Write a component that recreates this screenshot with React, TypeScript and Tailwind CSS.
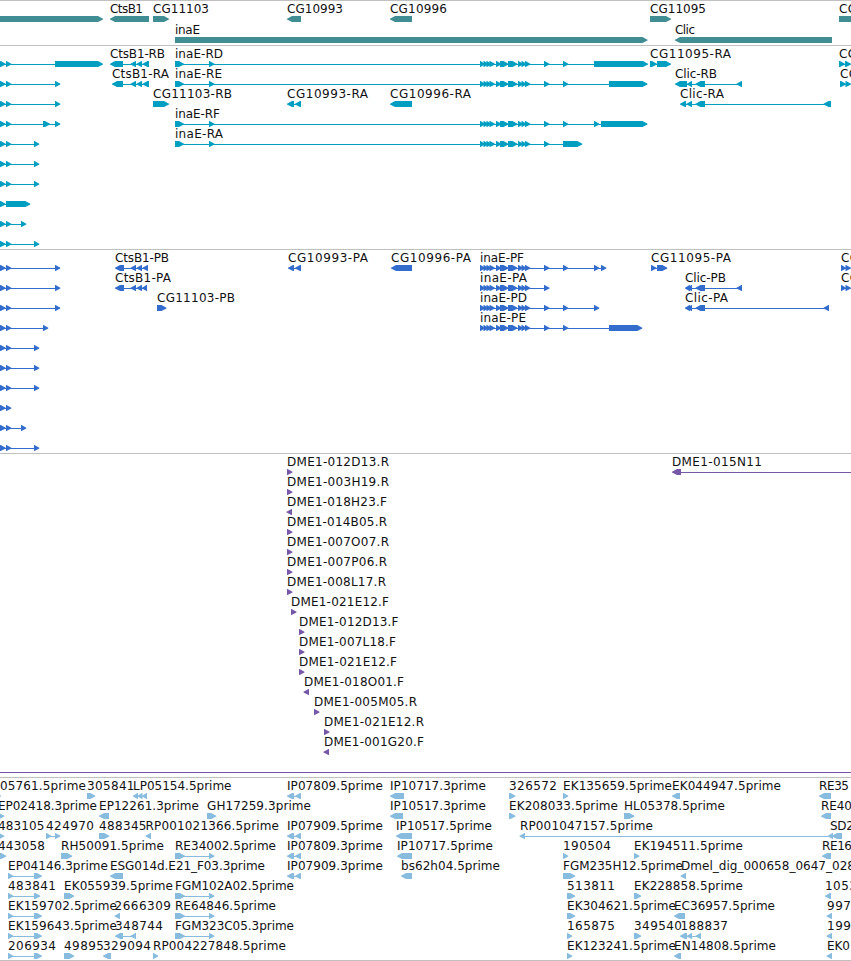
import React from "react";

type Exon = [number, number];

type Feature = {
  row: number;
  exons: Exon[];
  dir?: "left" | "right";
  // start, end and text of the caption above the feature
  label?: [number, number, string];
  // overrides the intron line, which normally runs from first to last exon
  line?: Exon;
};

type TrackProps = {
  features: Feature[];
  height: number;
  color: string;
  pitch?: number;
};

const TIP = 5;

const f = (
  row: number,
  dir: "left" | "right",
  exons: Exon[],
  label?: [number, number, string],
  line?: Exon
): Feature => ({ row, dir, exons, label, line });

// exons shared by every inaE isoform
const inaE: Exon[] = [
  [480, 485],
  [483.5, 488.5],
  [486.5, 491.5],
  [489.5, 495],
  [496, 501.5],
  [500, 508.5],
  [508, 517.5],
  [518, 523],
  [521.5, 526.5],
  [525, 530.3],
  [544, 549.5],
];
const inaEStart: Exon[] = [[175, 184], [209, 214.5]];
const head: Exon[] = [[-4, 5.7], [6, 11.3]];
const pair: Exon[] = [[287, 294], [295, 301]];
const reExons: Exon[] = [[175, 185], [209, 214.5]];
const epExons: Exon[] = [[8, 13.5], [34, 42]];

const genes: Feature[] = [
  f(0, "right", [[-10, 103]]),
  f(0, "left", [[110, 149]], [110, 143, "CtsB1"]),
  f(0, "right", [[153, 169]], [153, 209, "CG11103"]),
  f(0, "left", [[287, 301]], [287, 343, "CG10993"]),
  f(0, "left", [[390, 412]], [390, 447, "CG10996"]),
  f(0, "right", [[650, 671]], [650, 706, "CG11095"]),
  f(0, "right", [[839, 870]], [839, 857, "CG"]),
  f(1, "right", [[175, 647.5]], [175, 200, "inaE"]),
  f(1, "left", [[675, 832]], [675, 695, "Clic"]),
];

const transcripts: Feature[] = [
  f(0, "right", [...head, [55, 103]]),
  f(1, "right", [...head, [55, 60.3]]),
  f(2, "right", [...head, [55, 60.3]]),
  f(3, "right", [...head, [43, 50], [55, 60.3]]),
  f(4, "right", [...head, [34, 39.3]]),
  f(5, "right", [...head, [34, 39.3]]),
  f(6, "right", [...head, [34, 39.3]]),
  f(7, "right", [[-4, 5.7], [6, 30.3]]),
  f(8, "right", [...head, [21, 26.3]]),
  f(9, "right", [...head, [34, 39.3]]),
  f(0, "left", [[110, 123], [130.5, 136], [136.5, 142], [142.5, 149]], [110, 165, "CtsB1-RB"]),
  f(1, "left", [[112, 123], [130.5, 136], [136.5, 142], [142.5, 149]], [112, 169, "CtsB1-RA"]),
  f(2, "right", [[153, 169]], [153, 232, "CG11103-RB"]),
  f(0, "right", [...inaEStart, ...inaE, [563, 568.3], [594, 648]], [175, 223, "inaE-RD"]),
  f(1, "right", [...inaEStart, ...inaE, [563, 568.3], [609, 647.5]], [175, 222, "inaE-RE"]),
  f(3, "right", [...inaEStart, ...inaE, [563, 568.3], [594, 599.3], [601, 647.5]], [175, 220, "inaE-RF"]),
  f(4, "right", [...inaEStart, ...inaE, [563, 582.3]], [175, 223, "inaE-RA"]),
  f(2, "left", pair, [287, 368, "CG10993-RA"]),
  f(2, "left", [[390, 412]], [390, 471, "CG10996-RA"]),
  f(0, "right", [[650, 657], [657, 671]], [650, 731, "CG11095-RA"]),
  f(1, "left", [[675, 687], [687, 692], [695.5, 705], [736.5, 742]], [675, 717, "Clic-RB"]),
  f(2, "left", [[680, 686], [686.5, 692], [695.5, 705], [823.5, 831]], [680, 724, "Clic-RA"]),
  f(0, "right", [[839, 845], [845, 851]], [839, 857, "CG"]),
  f(1, "right", [[840, 846], [845.5, 851]], [840, 858, "CG"]),
];

const proteins: Feature[] = [
  f(0, "right", [...head, [55, 60.3]]),
  f(1, "right", [...head, [55, 60.3]]),
  f(2, "right", [...head, [55, 60.3]]),
  f(3, "right", [...head, [43, 48.3]]),
  f(4, "right", [...head, [34, 39.3]]),
  f(5, "right", [...head, [34, 39.3]]),
  f(6, "right", [...head, [34, 39.3]]),
  f(7, "right", head),
  f(8, "right", [...head, [21, 26.3]]),
  f(9, "right", [...head, [34, 39.3]]),
  f(0, "left", [[115, 124], [130.5, 136], [136.5, 142], [142.5, 148]], [115, 169, "CtsB1-PB"]),
  f(1, "left", [[115, 124], [130.5, 136], [136.5, 142], [142, 147]], [115, 171, "CtsB1-PA"]),
  f(2, "right", [[157, 166.5]], [157, 235, "CG11103-PB"]),
  f(0, "left", [[288, 294], [295, 301]], [288, 368, "CG10993-PA"]),
  f(0, "left", [[391, 412]], [391, 471, "CG10996-PA"]),
  f(0, "right", [...inaE, [563, 568.3], [594, 599.3], [601, 606.3]], [480, 524, "inaE-PF"]),
  f(1, "right", inaE, [480, 527, "inaE-PA"]),
  f(2, "right", [...inaE, [563, 568.3], [594, 599.3]], [480, 527, "inaE-PD"]),
  f(3, "right", [...inaE, [563, 568.3], [609, 642.3]], [480, 526, "inaE-PE"]),
  f(0, "right", [[651, 656.5], [657, 667.3]], [651, 731, "CG11095-PA"]),
  f(1, "left", [[685, 690], [687, 692], [695.5, 705], [736.5, 742]], [685, 726, "Clic-PB"]),
  f(2, "left", [[685, 690], [687, 692], [695.5, 705], [823.5, 829]], [685, 728, "Clic-PA"]),
  f(0, "right", [[841, 846], [845.5, 851]], [841, 859, "CG"]),
  f(1, "right", [[841, 846], [845.5, 851]], [841, 859, "CG"]),
];

const bacs: Feature[] = [
  f(0, "right", [[287, 292.5]], [287, 389, "DME1-012D13.R"]),
  f(1, "right", [[287, 292.5]], [287, 389, "DME1-003H19.R"]),
  f(2, "left", [[286.5, 292]], [287, 387, "DME1-018H23.F"]),
  f(3, "right", [[287, 292.5]], [287, 387, "DME1-014B05.R"]),
  f(4, "right", [[287, 292.5]], [287, 389, "DME1-007O07.R"]),
  f(5, "right", [[287, 292.5]], [287, 387, "DME1-007P06.R"]),
  f(6, "right", [[287, 292.5]], [287, 386, "DME1-008L17.R"]),
  f(7, "right", [[291, 296.5]], [291, 389, "DME1-021E12.F"]),
  f(8, "right", [[299, 304.5]], [299, 398.5, "DME1-012D13.F"]),
  f(9, "right", [[299, 304.5]], [299, 396, "DME1-007L18.F"]),
  f(10, "right", [[299, 304.5]], [299, 397, "DME1-021E12.F"]),
  f(11, "left", [[303.5, 309]], [304, 404, "DME1-018O01.F"]),
  f(12, "right", [[314, 319.5]], [314, 417, "DME1-005M05.R"]),
  f(13, "right", [[324, 329.5]], [324, 424, "DME1-021E12.R"]),
  f(14, "left", [[323.5, 329]], [324, 424, "DME1-001G20.F"]),
  f(0, "left", [[672, 681]], [672, 762, "DME1-015N11"], [672, 853]),
  f(15, "right", [], undefined, [-2, 853]),
];

const ests: Feature[] = [
  f(0, "right", [[-6, 1]], [0, 86, "05761.5prime"]),
  f(0, "right", [[87, 95.3]], [87, 134.5, "305841"]),
  f(0, "left", [[133, 138], [137.5, 142.5], [142, 147]], [133, 231.5, "LP05154.5prime"]),
  f(0, "left", pair, [287, 383, "IP07809.5prime"]),
  f(0, "left", [[390, 404]], [390, 486, "IP10717.3prime"]),
  f(0, "right", [[509, 515.5]], [509, 557, "326572"]),
  f(0, "right", [[563, 568.3]], [563, 672, "EK135659.5prime"]),
  f(0, "left", [[672, 680]], [672, 781, "EK044947.5prime"]),
  f(0, "left", [[819, 831]], [819, 849, "RE35"]),

  f(1, "right", [[-6, 4.3]], [-2, 97, "EP02418.3prime"]),
  f(1, "left", [[99, 109]], [99, 199, "EP12261.3prime"]),
  f(1, "right", [[207, 216.3]], [207, 311, "GH17259.3prime"]),
  f(1, "left", [[390, 403]], [390, 486, "IP10517.3prime"]),
  f(1, "right", [[509, 515.5]], [509, 618, "EK208033.5prime"]),
  f(1, "right", [[624, 634.5]], [624, 725, "HL05378.5prime"]),
  f(1, "left", [[821, 831]], [821, 852, "RE40"]),

  f(2, "right", [[-6, 4.3]], [-2, 44.5, "483105"]),
  f(2, "right", [[46, 51.3], [55, 60.3]], [46, 94, "424970"]),
  f(2, "right", [[99, 109.3]], [99, 146.5, "488345"]),
  f(2, "left", [[145.5, 151]], [145.5, 279, "RP001021366.5prime"]),
  f(2, "left", pair, [287, 383, "IP07909.5prime"]),
  f(2, "left", [[396, 412]], [396, 492, "IP10517.5prime"]),
  f(2, "left", [[519.5, 525], [828, 833], [832, 842]], [520, 653, "RP001047157.5prime"]),
  f(2, "left", [], [830, 854, "SD2"]),

  f(3, "right", [[-6, 6.3]], [-2, 45, "443058"]),
  f(3, "right", [[61, 72.3]], [61, 164, "RH50091.5prime"]),
  f(3, "right", reExons, [175, 276, "RE34002.5prime"]),
  f(3, "left", pair, [287, 383, "IP07809.3prime"]),
  f(3, "left", [[397, 412]], [397, 493, "IP10717.5prime"]),
  f(3, "right", [[563, 568.3]], [563, 611, "190504"]),
  f(3, "right", [[634, 639.5]], [634, 743, "EK194511.5prime"]),
  f(3, "left", [[822, 831]], [822, 852, "RE16"]),

  f(4, "right", epExons, [8, 108, "EP04146.3prime"]),
  f(4, "left", [[110, 123]], [110, 265, "ESG014d.E21_F03.3prime"]),
  f(4, "left", pair, [287, 383, "IP07909.3prime"]),
  f(4, "left", [[401, 412]], [401, 500, "bs62h04.5prime"]),
  f(4, "right", [[563, 575.3]], [563, 683, "FGM235H12.5prime"]),
  f(4, "left", [[680.5, 686]], [681, 855, "Dmel_dig_000658_0647_028"]),

  f(5, "right", [[8, 13.5], [34, 40.3]], [8, 56, "483841"]),
  f(5, "right", [[64, 74.3]], [64, 173, "EK055939.5prime"]),
  f(5, "right", reExons, [175, 294, "FGM102A02.5prime"]),
  f(5, "right", [[567, 575.3]], [567, 615, "513811"]),
  f(5, "right", [[634, 641.3]], [634, 743, "EK228858.5prime"]),
  f(5, "left", [[825, 831]], [825, 857, "1053"]),

  f(6, "right", epExons, [8, 117, "EK159702.5prime"]),
  f(6, "left", [[114.5, 120]], [114.5, 171, "2666309"]),
  f(6, "right", reExons, [175, 276, "RE64846.5prime"]),
  f(6, "right", [[567, 575.3]], [567, 676, "EK304621.5prime"]),
  f(6, "left", [[674, 685]], [674, 775, "EC36957.5prime"]),
  f(6, "left", [[826.5, 832]], [827, 851, "997"]),

  f(7, "right", epExons, [8, 117, "EK159643.5prime"]),
  f(7, "left", [[115, 123], [130.5, 136]], [115, 163, "348744"]),
  f(7, "right", reExons, [175, 294, "FGM323C05.3prime"]),
  f(7, "right", [[567, 572.3]], [567, 615, "165875"]),
  f(7, "right", [[634, 641.3]], [634, 682, "349540"]),
  f(7, "left", [[680, 687], [687, 692], [695.5, 701]], [680.5, 728, "188837"]),
  f(7, "left", [[826.5, 832]], [827, 851, "199"]),

  f(8, "right", epExons, [8, 56, "206934"]),
  f(8, "right", [[64, 74.3]], [64, 104, "49895"]),
  f(8, "left", [[103, 111]], [103, 151, "329094"]),
  f(8, "right", [[153, 158.3]], [153, 286, "RP004227848.5prime"]),
  f(8, "right", [[567, 572.3]], [567, 676, "EK123241.5prime"]),
  f(8, "left", [[674, 681]], [674, 776, "EN14808.5prime"]),
  f(8, "left", [[826.5, 832]], [827, 850, "EK0"]),
];

const arrow = ([a, b]: Exon, y: number, dir?: string) => {
  const tip = Math.min(TIP, b - a - 0.5);
  return dir === "left"
    ? `${b},${y} ${a + tip},${y} ${a},${y + 2.7} ${a},${y + 3.4} ${a + tip},${y + 6} ${b},${y + 6}`
    : `${a},${y} ${b - tip},${y} ${b},${y + 2.7} ${b},${y + 3.4} ${b - tip},${y + 6} ${a},${y + 6}`;
};

const Track = ({ features, height, color, pitch = 20 }: TrackProps) => {
  return (
    <section className="border-t border-[#c0c0c0]">
      <svg width={851} height={height} className={`block overflow-hidden ${color}`}>
        {features.map(({ row, exons, dir, label, line }, i) => {
          const y = row * pitch;
          const span = line ?? (exons.length > 1 ? [exons[0][0], exons[exons.length - 1][1]] : null);
          return (
            <g key={i}>
              {span && (
                <rect x={span[0] + 1} y={y + 18} width={span[1] - span[0] - 2} height={1} fill="currentColor" />
              )}
              {exons.map((exon, j) => (
                <polygon key={j} points={arrow(exon, y + 15, dir)} fill="currentColor" />
              ))}
              {label && (
                <text
                  x={label[0]}
                  y={y + 12}
                  textLength={label[1] - label[0]}
                  className="fill-[#111] font-['DejaVu_Sans',sans-serif] text-[12px]"
                >
                  {label[2]}
                </text>
              )}
            </g>
          );
        })}
      </svg>
    </section>
  );
};

const App = () => {
  return (
    <main className="w-[851px] h-[961px] overflow-hidden bg-white border-b border-[#c0c0c0]">
      <Track features={genes} height={44} color="text-[#408e94]" pitch={21} />
      <Track features={transcripts} height={203} color="text-[#009fc2]" />
      <Track features={proteins} height={203} color="text-[#326dce]" />
      <Track features={bacs} height={323} color="text-[#7758a8]" />
      <Track features={ests} height={182} color="text-[#87bcde]" />
    </main>
  );
};

export default App;
